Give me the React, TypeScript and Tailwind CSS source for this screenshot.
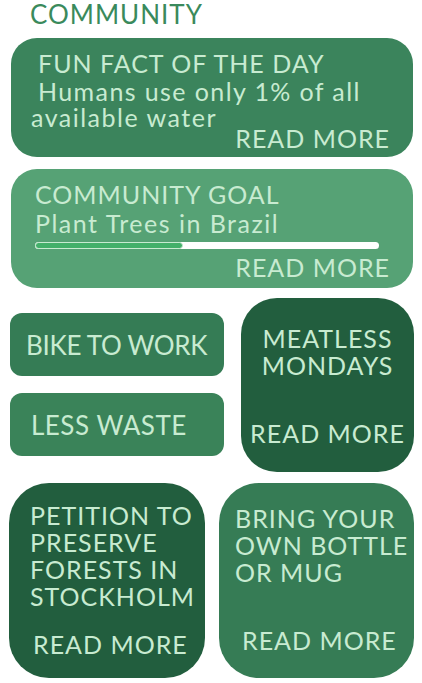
import React from 'react'

const font = { fontFamily: 'Lato, "Open Sans", sans-serif' }

function ReadMore({ className = '' }: { className?: string }) {
  return <div className={`text-[25px] leading-none tracking-[1px] whitespace-nowrap ${className}`}>READ MORE</div>
}

export default function App() {
  return (
    <div style={font} className="w-[422px] h-[683px] bg-white overflow-hidden text-[#c8ebd1]">
      <div className="pt-[1px] pl-[30px] text-[26px] leading-none tracking-[1px] text-[#3a8a5c]">COMMUNITY</div>

      <div className="mt-[11px] flex flex-col gap-[12px] pl-[11px] pr-[9px]">
        {/* fun fact */}
        <div className="h-[119px] rounded-[26px] bg-[#3b845c] pt-[13px] flex flex-col">
          <div className="pl-[27px] text-[25px] leading-none tracking-[1px]">FUN FACT OF THE DAY</div>
          <div className="mt-[3px] pl-[27px] text-[25px] leading-none tracking-[1.4px]">Humans use only 1% of all</div>
          <div className="mt-[1px] pl-[20px] text-[25px] leading-none tracking-[1.5px]">available water</div>
          <ReadMore className="-mt-[4px] self-end pr-[23px]" />
        </div>

        {/* community goal */}
        <div className="h-[119px] rounded-[26px] bg-[#56a275] pt-[13px] flex flex-col">
          <div className="pl-[24px] text-[25px] leading-none tracking-[1px]">COMMUNITY GOAL</div>
          <div className="mt-[4px] pl-[24px] text-[25px] leading-none tracking-[1.5px]">Plant Trees in Brazil</div>
          <div className="mt-[6px] ml-[24px] w-[344px] h-[7px] rounded-full bg-white">
            <div className="h-full w-[148px] rounded-full bg-[#43b06a] border border-[#c8ebd1]" />
          </div>
          <ReadMore className="mt-[6px] self-end pr-[23px]" />
        </div>
      </div>

      <div className="mt-[10px] pl-[10px] flex gap-[17px]">
        <div className="w-[214px] pt-[15px] flex flex-col gap-[17px]">
          <div className="h-[63px] rounded-[12px] bg-[#357c55] pl-[16px] flex items-center text-[26px] leading-none tracking-[-0.3px]">
            BIKE TO WORK
          </div>
          <div className="h-[63px] rounded-[12px] bg-[#3a8359] pl-[21px] flex items-center text-[26px] leading-none tracking-[0.5px]">
            LESS WASTE
          </div>
        </div>
        <div className="w-[173px] h-[174px] rounded-[36px] bg-[#225e3e] pt-[27px] flex flex-col items-center">
          <div className="text-[25px] leading-[27px] tracking-[1px] text-center">
            <div>MEATLESS</div>
            <div>MONDAYS</div>
          </div>
          <ReadMore className="mt-[42px]" />
        </div>
      </div>

      <div className="mt-[11px] pl-[9px] flex gap-[14px]">
        <div className="w-[196px] h-[195px] rounded-[40px] bg-[#225e3e] pt-[19px]">
          <div className="pl-[21px] text-[25px] leading-[27px] tracking-[1px] whitespace-nowrap">
            <div>PETITION TO</div>
            <div>PRESERVE</div>
            <div>FORESTS IN</div>
            <div>STOCKHOLM</div>
          </div>
          <ReadMore className="mt-[22px] pl-[24px]" />
        </div>
        <div className="w-[195px] h-[195px] rounded-[40px] bg-[#367c55] pt-[22px]">
          <div className="pl-[16px] text-[25px] leading-[27px] tracking-[1px] whitespace-nowrap">
            <div>BRING YOUR</div>
            <div>OWN BOTTLE</div>
            <div>OR MUG</div>
          </div>
          <ReadMore className="mt-[42px] pl-[23px]" />
        </div>
      </div>
    </div>
  )
}
